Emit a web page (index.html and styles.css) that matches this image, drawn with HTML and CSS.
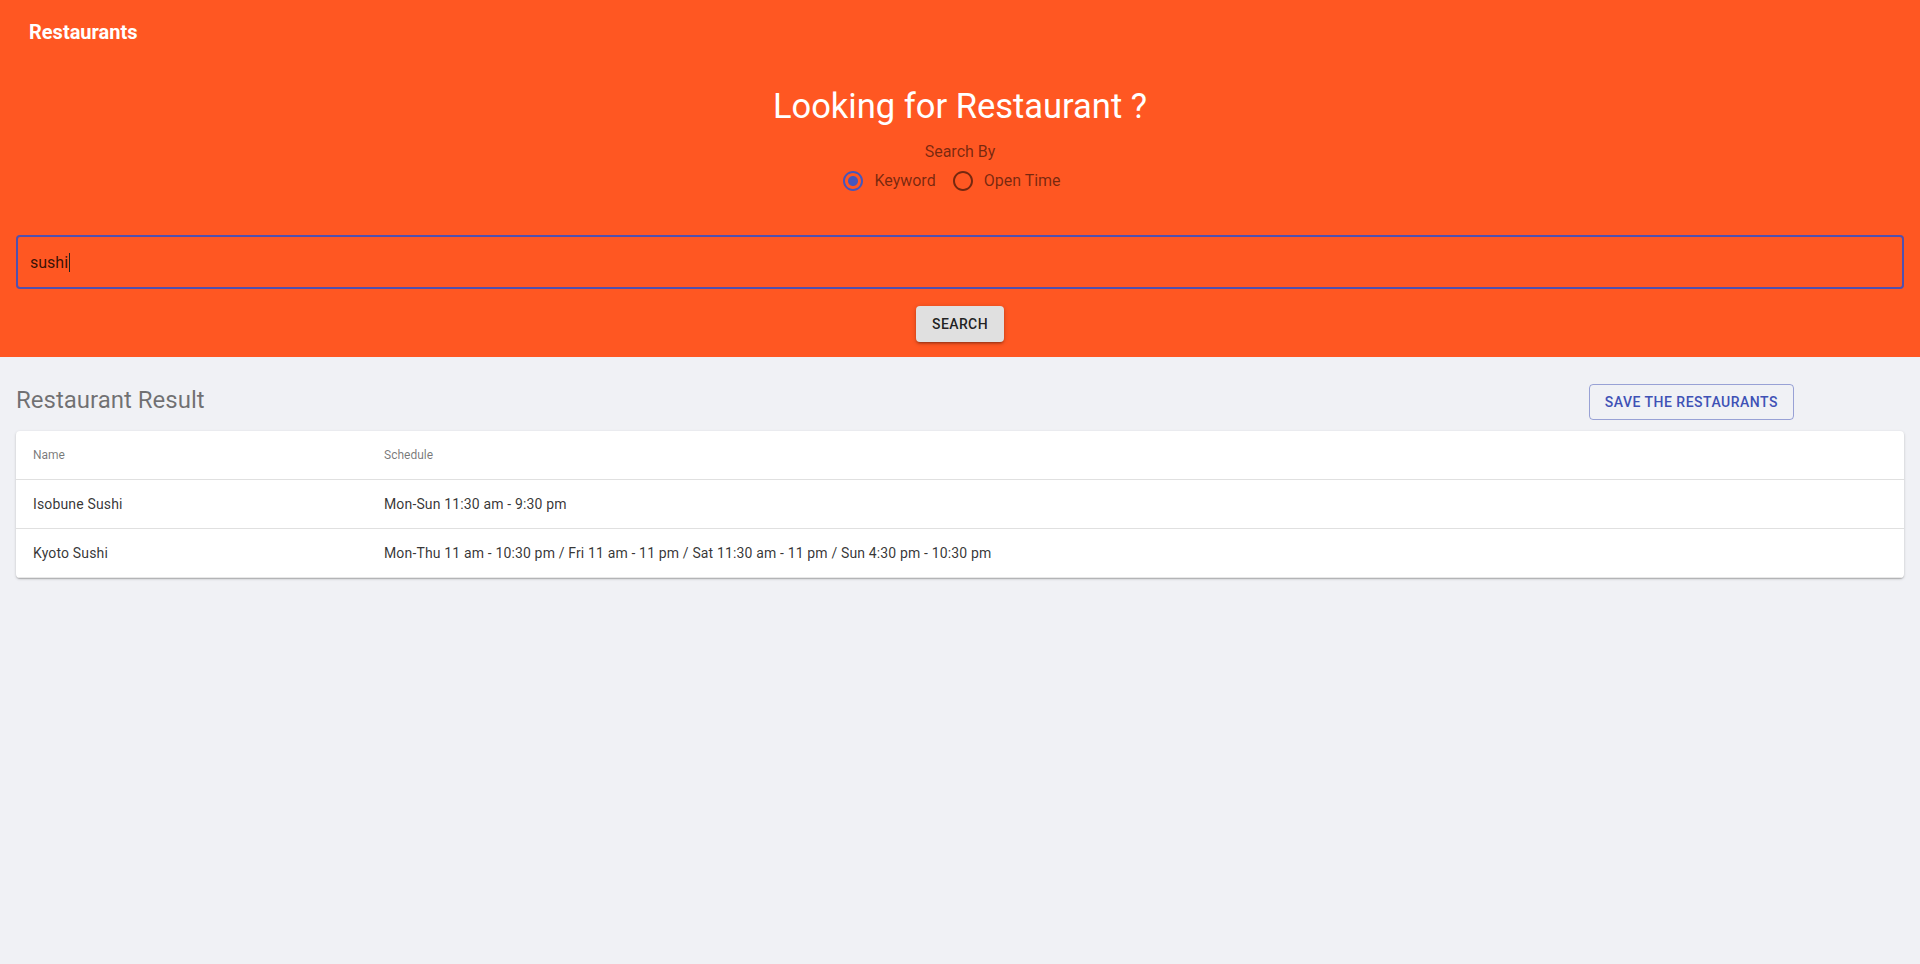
FILE: index.html
```html
<!DOCTYPE html>
<html lang="en">
<head>
<meta charset="utf-8">
<title>Restaurants</title>
<link rel="stylesheet" href="styles.css">
</head>
<body>
<header class="hero">
  <div class="toolbar"><h1 class="brand">Restaurants</h1></div>
  <div class="search">
    <h2 class="headline">Looking for Restaurant ?</h2>
    <div class="search-by">Search By</div>
    <div class="radio-group">
      <label class="radio radio-checked">
        <svg class="radio-icon" viewBox="0 0 24 24" width="24" height="24"><path d="M12 2C6.48 2 2 6.48 2 12s4.48 10 10 10 10-4.48 10-10S17.52 2 12 2zm0 18c-4.42 0-8-3.58-8-8s3.58-8 8-8 8 3.58 8 8-3.58 8-8 8z"/><path d="M12 7c-2.76 0-5 2.24-5 5s2.24 5 5 5 5-2.24 5-5-2.24-5-5-5z"/></svg>
        <span class="radio-label">Keyword</span>
      </label>
      <label class="radio">
        <svg class="radio-icon" viewBox="0 0 24 24" width="24" height="24"><path d="M12 2C6.48 2 2 6.48 2 12s4.48 10 10 10 10-4.48 10-10S17.52 2 12 2zm0 18c-4.42 0-8-3.58-8-8s3.58-8 8-8 8 3.58 8 8-3.58 8-8 8z"/></svg>
        <span class="radio-label">Open Time</span>
      </label>
    </div>
    <div class="field"><span class="field-value">sushi</span><span class="caret"></span></div>
    <button class="btn-raised" type="button">Search</button>
  </div>
</header>
<main class="results">
  <div class="results-head">
    <h3 class="results-title">Restaurant Result</h3>
    <button class="btn-outlined" type="button">Save the restaurants</button>
  </div>
  <div class="table">
    <div class="tr tr-head"><div class="td">Name</div><div class="td">Schedule</div></div>
    <div class="tr"><div class="td">Isobune Sushi</div><div class="td">Mon-Sun 11:30 am - 9:30 pm</div></div>
    <div class="tr"><div class="td">Kyoto Sushi</div><div class="td">Mon-Thu 11 am - 10:30 pm / Fri 11 am - 11 pm / Sat 11:30 am - 11 pm / Sun 4:30 pm - 10:30 pm</div></div>
  </div>
</main>
</body>
</html>
```

FILE: styles.css
```css
* { box-sizing: border-box; }
html, body { margin: 0; padding: 0; }
body {
  font-family: Roboto, "Liberation Sans", Arial, sans-serif;
  background: #f0f1f5;
  min-height: 964px;
}
.hero {
  background: #ff5722;
  padding-bottom: 15px;
}
.toolbar {
  height: 64px;
  display: flex;
  align-items: center;
  padding-left: 29px;
}
.brand {
  margin: 0;
  font-size: 20px;
  font-weight: 700;
  line-height: 32px;
  color: #fff;
}
.search {
  display: flex;
  flex-direction: column;
  align-items: center;
  padding: 22px 16px 0;
}
.headline {
  margin: 0;
  font-size: 34.5px;
  font-weight: 400;
  line-height: 40px;
  color: #fff;
}
.search-by {
  margin-top: 16px;
  font-size: 16px;
  line-height: 19px;
  color: rgba(0, 0, 0, 0.54);
}
.radio-group {
  margin-top: 8px;
  height: 24px;
  display: flex;
  align-items: center;
  padding-right: 18px;
}
.radio {
  display: inline-flex;
  align-items: center;
  gap: 9px;
  font-size: 16px;
  line-height: 24px;
  color: rgba(0, 0, 0, 0.54);
}
.radio + .radio { margin-left: 15px; }
.radio-icon { display: block; fill: rgba(0, 0, 0, 0.54); }
.radio-checked .radio-icon { fill: #4556bd; }
.field {
  margin-top: 42px;
  align-self: stretch;
  height: 54px;
  border: 2px solid #5150ad;
  border-radius: 4px;
  display: flex;
  align-items: center;
  padding: 0 12px;
  font-size: 16px;
  color: rgba(0, 0, 0, 0.8);
}
.field-value { line-height: 19px; }
.caret {
  display: inline-block;
  width: 1px;
  height: 19px;
  margin-left: 1px;
  background: #222;
}
.btn-raised {
  margin-top: 17px;
  height: 36px;
  padding: 6px 16px;
  border: 0;
  border-radius: 4px;
  background: #e0e0e0;
  color: rgba(0, 0, 0, 0.87);
  font-family: inherit;
  font-size: 14px;
  font-weight: 500;
  line-height: 24px;
  letter-spacing: 0.4px;
  text-transform: uppercase;
  box-shadow: 0 1px 5px rgba(0, 0, 0, 0.2), 0 2px 2px rgba(0, 0, 0, 0.14), 0 3px 1px -2px rgba(0, 0, 0, 0.12);
}
.results {
  padding: 27px 16px 0;
}
.results-head {
  display: flex;
  justify-content: space-between;
  align-items: flex-start;
  padding-right: 110px;
}
.results-title {
  margin: 0;
  font-size: 24px;
  font-weight: 400;
  line-height: 32px;
  color: rgba(0, 0, 0, 0.54);
}
.btn-outlined {
  height: 36px;
  padding: 5px 15px;
  border: 1px solid rgba(63, 81, 181, 0.5);
  border-radius: 4px;
  background: transparent;
  color: #3f51b5;
  font-family: inherit;
  font-size: 14px;
  font-weight: 500;
  line-height: 24px;
  letter-spacing: 0.5px;
  text-transform: uppercase;
}
.table {
  margin-top: 11px;
  background: #fff;
  border-radius: 4px;
  box-shadow: 0 1px 3px rgba(0, 0, 0, 0.18), 0 1px 1px rgba(0, 0, 0, 0.1), 0 2px 1px -1px rgba(0, 0, 0, 0.08);
  overflow: hidden;
}
.tr {
  display: grid;
  grid-template-columns: 351px 1fr;
  height: 49px;
  border-bottom: 1px solid #e0e0e0;
  font-size: 14px;
  letter-spacing: 0.15px;
  color: rgba(0, 0, 0, 0.8);
}
.tr:last-child { border-bottom-color: #e8e8e8; }
.tr-head {
  font-size: 12px;
  letter-spacing: 0;
  color: rgba(0, 0, 0, 0.54);
}
.td {
  display: flex;
  align-items: center;
  padding-left: 17px;
}
```
